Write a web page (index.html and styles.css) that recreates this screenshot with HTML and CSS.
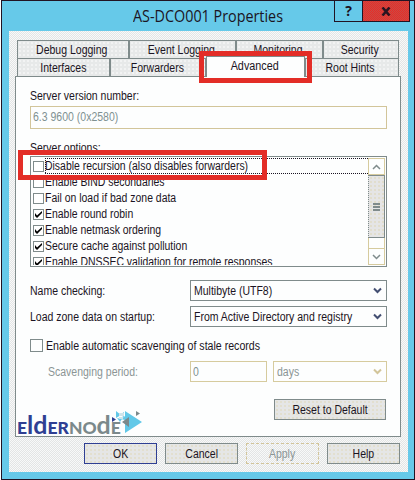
FILE: index.html
```html
<!DOCTYPE html>
<html lang="en">
<head>
<meta charset="utf-8">
<title>AS-DCO001 Properties</title>
<link rel="stylesheet" href="styles.css">
</head>
<body>
<div class="window">
  <header class="titlebar">
    <h1 class="title">AS-DCO001 Properties</h1>
    <div class="caption">
      <div class="cap-help">?</div>
      <div class="cap-close"><svg width="10" height="9" viewBox="0 0 10 9"><path d="M1.500 .5l7 8M8.500 .5l-7 8" stroke="#2a1420" stroke-width="2.600"/></svg></div>
    </div>
  </header>
  <main class="client">
    <div class="tabs row1">
      <div class="tab w112"><span>Debug Logging</span></div>
      <div class="tab w107"><span>Event Logging</span></div>
      <div class="tab w87"><span>Monitoring</span></div>
      <div class="tab w76"><span>Security</span></div>
    </div>
    <div class="tabs row2">
      <div class="tab w93"><span>Interfaces</span></div>
      <div class="tab w96"><span>Forwarders</span></div>
      <div class="tab active"><span>Advanced</span></div>
      <div class="tab w94"><span>Root Hints</span></div>
      <div class="mark mark-tab"></div>
    </div>
    <section class="panel">
      <div class="label first"><span>Server version number:</span></div>
      <div class="field version"><span>6.3 9600 (0x2580)</span></div>
      <div class="label second"><span>Server options:</span></div>
      <div class="listbox">
        <div class="items">
          <div class="item focus"><i class="box"></i><span>Disable recursion (also disables forwarders)</span></div>
          <div class="item"><i class="box"></i><span>Enable BIND secondaries</span></div>
          <div class="item"><i class="box"></i><span>Fail on load if bad zone data</span></div>
          <div class="item"><i class="box"><svg viewBox="0 0 9 9"><path d="M1 3v3l2 2 5-5V1L3 5.500z"/></svg></i><span>Enable round robin</span></div>
          <div class="item"><i class="box"><svg viewBox="0 0 9 9"><path d="M1 3v3l2 2 5-5V1L3 5.500z"/></svg></i><span>Enable netmask ordering</span></div>
          <div class="item"><i class="box"><svg viewBox="0 0 9 9"><path d="M1 3v3l2 2 5-5V1L3 5.500z"/></svg></i><span>Secure cache against pollution</span></div>
          <div class="item"><i class="box"><svg viewBox="0 0 9 9"><path d="M1 3v3l2 2 5-5V1L3 5.500z"/></svg></i><span>Enable DNSSEC validation for remote responses</span></div>
        </div>
        <div class="scroll">
          <div class="arrow"><svg width="9" height="6" viewBox="0 0 9 6"><path d="M1 5l3.500-3.500L8 5"/></svg></div>
          <div class="thumb"><i></i><i></i><i></i></div>
          <div class="track"></div>
          <div class="arrow"><svg width="9" height="6" viewBox="0 0 9 6"><path d="M1 1l3.500 3.500L8 1"/></svg></div>
        </div>
        <div class="mark mark-list"></div>
      </div>
      <div class="row check-name"><div class="name"><span>Name checking:</span></div>
        <div class="field combo"><span>Multibyte (UTF8)</span><svg width="9" height="7" viewBox="0 0 9 7"><path d="M1 1.500l3.500 3.500L8 1.500"/></svg></div></div>
      <div class="row load"><div class="name"><span>Load zone data on startup:</span></div>
        <div class="field combo"><span>From Active Directory and registry</span><svg width="9" height="7" viewBox="0 0 9 7"><path d="M1 1.500l3.500 3.500L8 1.500"/></svg></div></div>
      <div class="scavenge"><i class="bigbox"></i><span>Enable automatic scavenging of stale records</span></div>
      <div class="row period"><div class="name"><span>Scavenging period:</span></div>
        <div class="field zero"><span>0</span></div>
        <div class="field combo days"><span>days</span><svg width="9" height="7" viewBox="0 0 9 7"><path d="M1 1.500l3.500 3.500L8 1.500"/></svg></div></div>
      <div class="button reset"><span>Reset to Default</span></div>
      <div class="logo"><div class="blue"><b>E</b>ld<b>ER</b></div><div class="gray"><b>NO</b>d<b>E</b></div>
        <svg class="mosaic" width="32" height="23" viewBox="0 0 32 23">
          <path d="M5 0l5 4-5 3zM9 4l4-3v5zM14 0l17 11-17 11zM6 7l5 1-2 3zM10 8l4-3v4z" fill="#62c8e8"/>
          <path d="M1 6l4 2.500-4 2.500z" fill="#2f3f93"/>
          <path d="M18 6v10l-7-5zM25 0l4 2.500-4 2.500z" fill="#7b898b"/>
          <path d="M8 2h5v3H8zM8 6h4v2H8z" fill="#cfe4ea"/>
        </svg>
      </div>
    </section>
    <footer class="actions">
      <div class="button ok"><span>OK</span></div>
      <div class="button"><span>Cancel</span></div>
      <div class="button off"><span>Apply</span></div>
      <div class="button"><span>Help</span></div>
    </footer>
  </main>
</div>
</body>
</html>
```
FILE: styles.css
```css
* { box-sizing: border-box; }
body { margin: 0; background: #fff; font: 12px/14px "Liberation Sans", Arial, sans-serif; color: #1b1423; }
span { white-space: nowrap; display: inline-block; transform: scaleX(.875); transform-origin: left; }
i { display: block; flex: none; }
svg { display: block; }
.window { width: 414px; height: 480px; margin-left: 1px; border: 1px solid #211323; background: #66c9e9; overflow: hidden; }
.titlebar { height: 30px; display: flex; justify-content: space-between; }
.title { margin: 3px 0 0 131px; font: 15.500px/24px "Open Sans", sans-serif; white-space: nowrap; transform: scaleX(.926); transform-origin: left; }
.caption { display: flex; height: 21px; margin-right: 4px; border: 1px solid #211323; border-top: 0; }
.cap-help { width: 28px; font: bold 14px/20px "Open Sans", sans-serif; text-align: center; border-right: 1px solid #211323; }
.cap-close { width: 46px; display: flex; align-items: center; justify-content: center; background: repeating-conic-gradient(#c94b45 0 25%, #e62d28 0 50%) 0 0 / 2px 2px; }
.client { margin: 0 6px 0 7px; height: 441px; padding: 9px 6px 0; background: repeating-conic-gradient(#e3e5e5 0 25%, #f8f9f9 0 50%) 0 0 / 2px 2px; }
.tabs { display: flex; height: 18px; margin-left: 2px; }
.tab { height: 18px; border: 1px solid #7f8b8b; border-bottom: 0; display: flex; align-items: center; justify-content: center; background: radial-gradient(circle, #fff 0 .6px, transparent .8px) 0 0 / 4px 4px #e7e9e9; }
.tab span, .button span { transform-origin: center; }
.row1 .tab, .row2 .w96 { padding-right: 2px; }
.row2 { position: relative; }
.w112 { width: 112px; } .w107 { width: 107px; } .w87 { width: 87px; } .w76 { width: 76px; }
.w93 { width: 93px; } .w96 { width: 96px; } .w94 { width: 94px; padding-right: 3px; }
.active { width: 99px; height: 21px; margin-top: -2px; background: #fdfefe; position: relative; padding: 0 2px 2px 0; }
.active span { transform: scaleX(.9); }
.mark { position: absolute; border: 5px solid #e32d27; }
.mark-tab { left: 182px; top: -7px; width: 113px; height: 32px; }
.panel { width: 386px; height: 361px; border: 1px solid #7f8b8b; background: #fdfefe; padding: 0 0 0 14px; }
.label { height: 14px; }
.first { margin-top: 12px; }
.second { margin-top: 12px; }
.field { border: 1px solid #7f8b8b; background: #fdfefe; }
.version { width: 357px; height: 23px; margin-top: 3px; border-color: #d2c59a; color: #7f9191; padding: 3px 0 0 2px; }
.listbox { position: relative; width: 357px; height: 111px; margin-top: 1px; border: 1px solid #7f8b8b; display: flex; padding: 1px; }
.items { width: 338px; height: 107px; overflow: hidden; }
.item { height: 16px; display: flex; align-items: center; padding-left: 1px; }
.item span { transform: scaleX(.87); }
.focus { background: repeating-linear-gradient(90deg, #1b1423 0 1px, transparent 1px 2px) 13px 0 / 325px 1px no-repeat, repeating-linear-gradient(90deg, #1b1423 0 1px, transparent 1px 2px) 13px 15px / 325px 1px no-repeat, repeating-linear-gradient(#1b1423 0 1px, transparent 1px 2px) 13px 0 / 1px 16px no-repeat; }
.box { width: 11px; height: 11px; border: 1px solid #7f8b8b; margin-right: 1px; background: #fff; }
.scroll { width: 17px; height: 107px; display: flex; flex-direction: column; }
.scroll svg, .combo svg { fill: none; stroke: #7f8b8b; stroke-width: 1.500; }
.arrow { height: 17px; border: 1px solid #d6cb9e; display: flex; align-items: center; justify-content: center; }
.thumb { height: 63px; border: 1px solid #7f8b8b; border-left-style: dotted; display: flex; flex-direction: column; align-items: center; justify-content: center; gap: 1px; background: radial-gradient(circle, #d9cc98 0 .5px, transparent .8px) 0 0 / 4px 4px #e5e5e5; }
.thumb i { width: 7px; height: 2px; background: #7f8b8b; }
.track { height: 10px; border: solid #d6cb9e; border-width: 0 1px; }
.mark-list { left: -13px; top: -7px; width: 249px; height: 30px; }
.row { display: flex; align-items: center; height: 21px; }
.name { width: 160px; flex: none; }
.combo { width: 197px; height: 21px; display: flex; align-items: center; justify-content: space-between; padding: 0 4px 0 3px; }
.combo span { min-width: 0; flex: 0 1 auto; }
.combo svg { flex: none; stroke: #434f72; stroke-width: 2; }
.check-name { margin-top: 13px; }
.load { margin-top: 5px; }
.scavenge { display: flex; align-items: center; height: 13px; margin-top: 12px; }
.scavenge span { transform: scaleX(.884); }
.bigbox { width: 13px; height: 13px; border: 1px solid #7f8b8b; margin-right: 3px; }
.period { margin-top: 9px; color: #8b9595; }
.period .name { width: 142px; margin-left: 18px; }
.period .field { border-color: #d6cb9e; }
.zero { width: 77px; height: 21px; padding: 3px 2px 0; color: #7f9191; }
.period .days { width: 114px; margin-left: 6px; }
.period .days svg { stroke: #d2c59a; }
.button { width: 73px; height: 21px; border: 1px solid #7f8b8b; display: flex; align-items: center; justify-content: center; background: radial-gradient(circle, #dccf9c 0 .5px, transparent .8px) 0 0 / 4px 4px #e5e6e6; }
.reset { width: 112px; margin: 17px 0 0 244px; }
.logo { display: flex; align-items: baseline; height: 24px; margin: -9px 0 0 -13px; font: bold 25px/27px "Lato", sans-serif; position: relative; }
.logo b { font-size: 17.500px; }
.blue { color: #2f3f93; } .gray { color: #7b898b; }
.mosaic { position: absolute; left: 94px; top: 0; }
.actions { display: flex; gap: 8px; margin: 6px 0 0 69px; }
.ok { border-color: #2f3f93; }
.off { border: 1px dashed #d2c59a; background: none; color: #8b9595; }
```
